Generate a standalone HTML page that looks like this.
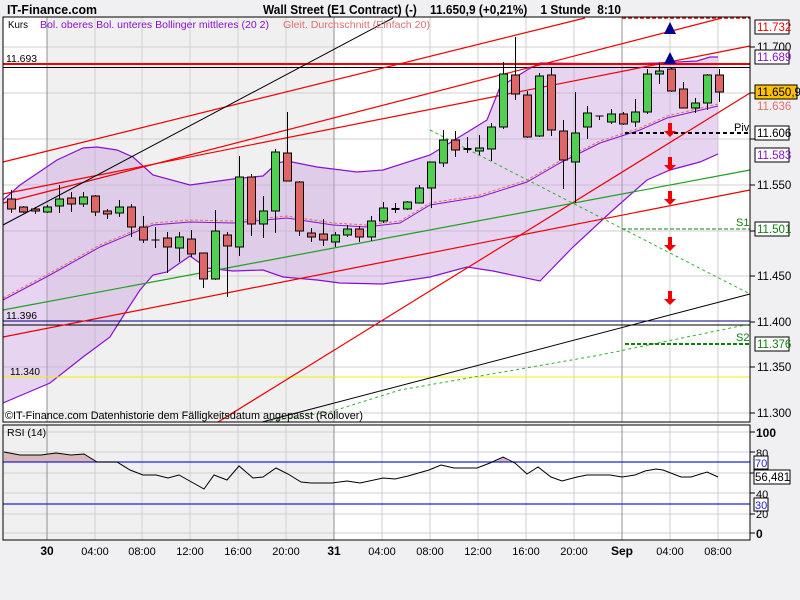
<!DOCTYPE html>
<html><head><meta charset="utf-8"><style>
body{margin:0;background:#f0f0f0;width:800px;height:600px;overflow:hidden;font-family:"Liberation Sans",Arial,sans-serif}
svg{display:block}
text{font-family:"Liberation Sans",Arial,sans-serif}
</style></head><body>
<svg width="800" height="600" viewBox="0 0 800 600" xmlns="http://www.w3.org/2000/svg">
<rect x="0" y="0" width="800" height="600" fill="#f0f0f2"/>
<text x="7" y="14" font-size="13" font-weight="bold" fill="#000" textLength="90" lengthAdjust="spacingAndGlyphs">IT-Finance.com</text>
<text x="263" y="14" font-size="12.5" font-weight="bold" fill="#000" xml:space="preserve" textLength="358" lengthAdjust="spacingAndGlyphs">Wall Street (E1 Contract) (-)    11.650,9 (+0,21%)    1 Stunde  8:10</text>
<!-- main panel -->
<rect x="3" y="17" width="747" height="405" fill="#fff"/>
<rect x="47" y="17" width="287" height="405" fill="#f0f0f0"/>
<g stroke="#cfcfcf" stroke-width="1">
<line x1="3" y1="47" x2="750" y2="47"/><line x1="3" y1="93" x2="750" y2="93"/><line x1="3" y1="139" x2="750" y2="139"/><line x1="3" y1="185" x2="750" y2="185"/><line x1="3" y1="231" x2="750" y2="231"/><line x1="3" y1="276" x2="750" y2="276"/><line x1="3" y1="367" x2="750" y2="367"/><line x1="3" y1="413" x2="750" y2="413"/>
<line x1="95" y1="17" x2="95" y2="422"/><line x1="142" y1="17" x2="142" y2="422"/><line x1="190" y1="17" x2="190" y2="422"/><line x1="238" y1="17" x2="238" y2="422"/><line x1="286" y1="17" x2="286" y2="422"/><line x1="382" y1="17" x2="382" y2="422"/><line x1="430" y1="17" x2="430" y2="422"/><line x1="478" y1="17" x2="478" y2="422"/><line x1="526" y1="17" x2="526" y2="422"/><line x1="574" y1="17" x2="574" y2="422"/><line x1="670" y1="17" x2="670" y2="422"/><line x1="718" y1="17" x2="718" y2="422"/>
</g>
<g stroke="#909090"><line x1="47" y1="17" x2="47" y2="422"/><line x1="334" y1="17" x2="334" y2="422"/><line x1="622" y1="17" x2="622" y2="422"/></g>
<!-- bollinger band -->
<polygon fill="#c8a0e0" fill-opacity="0.45" stroke="none" points="3,200 20,185 57,160 83,148 97,147 117,150 133,157 153,175 190,185 233,179 263,176 277,163 287,161 317,167 357,172 383,170 430,155 487,120 500,87 527,70 540,63 620,64 657,63 697,61 710,57 718,57 718,154 700,162 670,170 647,180 613,210 573,247 540,281 493,271 467,267 430,277 383,284 340,283 317,280 283,277 263,270 233,271 207,268 190,256 167,272 153,275 140,290 127,310 110,337 83,357 50,383 3,403"/>
<polyline fill="none" stroke="#8a10d0" stroke-width="1.2" points="3,200 20,185 57,160 83,148 97,147 117,150 133,157 153,175 190,185 233,179 263,176 277,163 287,161 317,167 357,172 383,170 430,155 487,120 500,87 527,70 540,63 620,64 657,63 697,61 710,57 718,57"/>
<polyline fill="none" stroke="#8a10d0" stroke-width="1.2" points="3,403 50,383 83,357 110,337 127,310 140,290 153,275 167,272 190,256 207,268 233,271 263,270 283,277 317,280 340,283 383,284 430,277 467,267 493,271 540,281 573,247 613,210 647,180 670,170 700,162 718,154"/>
<polyline fill="none" stroke="#8a10d0" stroke-width="1" points="3,300 50,275 100,247 133,233 153,225 190,222 233,223 287,218 333,225 367,227 400,223 430,205 480,197 527,182 560,163 600,143 640,130 667,118 718,106"/>
<polyline fill="none" stroke="#e07060" stroke-width="1" stroke-dasharray="3,2" points="3,298 50,273 100,245 133,231 153,223 190,220 233,221 287,216 333,223 367,225 400,221 430,203 480,195 527,180 560,161 600,141 640,128 667,116 718,104"/>
<!-- horizontal lines -->
<line x1="3" y1="64" x2="750" y2="64" stroke="#f00000" stroke-width="2"/>
<line x1="3" y1="67.5" x2="750" y2="67.5" stroke="#000" stroke-width="1"/>
<line x1="3" y1="321" x2="750" y2="321" stroke="#000080" stroke-width="1"/>
<line x1="3" y1="325" x2="750" y2="325" stroke="#000" stroke-width="1"/>
<line x1="3" y1="377" x2="750" y2="377" stroke="#f0f000" stroke-width="1"/>
<!-- trend lines -->
<g stroke="#f00000" stroke-width="1.2" fill="none">
<line x1="3" y1="162" x2="585" y2="18"/>
<line x1="3" y1="194" x2="750" y2="46"/>
<line x1="3" y1="203" x2="722" y2="18"/>
<line x1="3" y1="337" x2="750" y2="190"/>
<line x1="218" y1="422" x2="750" y2="93"/>
</g>
<line x1="3" y1="225" x2="393" y2="18" stroke="#000" stroke-width="1"/>
<line x1="262" y1="422" x2="750" y2="294" stroke="#000" stroke-width="1"/>
<line x1="3" y1="310" x2="750" y2="170" stroke="#20a020" stroke-width="1.2"/>
<polyline fill="none" stroke="#30b030" stroke-width="1" stroke-dasharray="3,3" points="270,421 330,412 400,390 600,355 750,324"/>
<line x1="430" y1="130" x2="750" y2="294" stroke="#30b030" stroke-width="1" stroke-dasharray="3,3"/>
<!-- pivots -->
<line x1="622" y1="18" x2="750" y2="18" stroke="#f00000" stroke-width="1.5" stroke-dasharray="4,2"/>
<line x1="625" y1="133" x2="750" y2="133" stroke="#000" stroke-width="2" stroke-dasharray="4,3"/>
<line x1="622" y1="229" x2="750" y2="229" stroke="#108010" stroke-width="1" stroke-dasharray="4,2"/>
<line x1="625" y1="344" x2="750" y2="344" stroke="#108010" stroke-width="2" stroke-dasharray="4,2"/>
<text x="734" y="131" font-size="11" fill="#000">Piv</text>
<text x="736" y="226" font-size="11" fill="#108010">S1</text>
<text x="736" y="341" font-size="11" fill="#108010">S2</text>
<!-- candles -->
<g stroke="#000" stroke-width="1">
<line x1="11.5" y1="190" x2="11.5" y2="213"/><rect x="7.5" y="199" width="8" height="10" fill="#df6666"/>
<line x1="23.5" y1="206" x2="23.5" y2="213"/><rect x="19.5" y="207" width="8" height="5" fill="#df6666"/>
<line x1="35.5" y1="207" x2="35.5" y2="214"/><rect x="31.5" y="209" width="8" height="2" fill="#df6666"/>
<line x1="47.5" y1="205" x2="47.5" y2="213"/><rect x="43.5" y="207" width="8" height="5" fill="#50d050"/>
<line x1="59.5" y1="185" x2="59.5" y2="213"/><rect x="55.5" y="199" width="8" height="7" fill="#50d050"/>
<line x1="71.5" y1="192" x2="71.5" y2="212"/><rect x="67.5" y="198" width="8" height="6" fill="#df6666"/>
<line x1="83.5" y1="192" x2="83.5" y2="207"/><rect x="79.5" y="197" width="8" height="7" fill="#50d050"/>
<line x1="95.5" y1="195" x2="95.5" y2="216"/><rect x="91.5" y="196" width="8" height="16" fill="#df6666"/>
<line x1="107.5" y1="209" x2="107.5" y2="219"/><rect x="103.5" y="211" width="8" height="3" fill="#df6666"/>
<line x1="119.5" y1="200" x2="119.5" y2="217"/><rect x="115.5" y="207" width="8" height="6" fill="#50d050"/>
<line x1="131.5" y1="204" x2="131.5" y2="237"/><rect x="127.5" y="207" width="8" height="20" fill="#df6666"/>
<line x1="143.5" y1="216" x2="143.5" y2="243"/><rect x="139.5" y="227" width="8" height="13" fill="#df6666"/>
<line x1="155.5" y1="227" x2="155.5" y2="248"/><line x1="151.5" y1="240" x2="159.5" y2="240"/>
<line x1="167.5" y1="232" x2="167.5" y2="273"/><rect x="163.5" y="238" width="8" height="9" fill="#df6666"/>
<line x1="179.5" y1="232" x2="179.5" y2="262"/><rect x="175.5" y="237" width="8" height="11" fill="#50d050"/>
<line x1="191.5" y1="230" x2="191.5" y2="257"/><rect x="187.5" y="239" width="8" height="15" fill="#df6666"/>
<line x1="203.5" y1="253" x2="203.5" y2="288"/><rect x="199.5" y="253" width="8" height="26" fill="#df6666"/>
<line x1="215.5" y1="210" x2="215.5" y2="280"/><rect x="211.5" y="231" width="8" height="48" fill="#50d050"/>
<line x1="227.5" y1="232" x2="227.5" y2="297"/><rect x="223.5" y="235" width="8" height="11" fill="#df6666"/>
<line x1="239.5" y1="156" x2="239.5" y2="256"/><rect x="235.5" y="177" width="8" height="70" fill="#50d050"/>
<line x1="251.5" y1="174" x2="251.5" y2="236"/><rect x="247.5" y="177" width="8" height="47" fill="#df6666"/>
<line x1="263.5" y1="196" x2="263.5" y2="238"/><rect x="259.5" y="211" width="8" height="13" fill="#50d050"/>
<line x1="275.5" y1="149" x2="275.5" y2="233"/><rect x="271.5" y="152" width="8" height="59" fill="#50d050"/>
<line x1="287.5" y1="112" x2="287.5" y2="181"/><rect x="283.5" y="153" width="8" height="28" fill="#df6666"/>
<line x1="299.5" y1="181" x2="299.5" y2="236"/><rect x="295.5" y="182" width="8" height="49" fill="#df6666"/>
<line x1="311.5" y1="228" x2="311.5" y2="242"/><rect x="307.5" y="233" width="8" height="4" fill="#df6666"/>
<line x1="323.5" y1="219" x2="323.5" y2="246"/><rect x="319.5" y="234" width="8" height="6" fill="#df6666"/>
<line x1="335.5" y1="232" x2="335.5" y2="247"/><rect x="331.5" y="235" width="8" height="7" fill="#50d050"/>
<line x1="347.5" y1="225" x2="347.5" y2="237"/><rect x="343.5" y="229" width="8" height="6" fill="#50d050"/>
<line x1="359.5" y1="226" x2="359.5" y2="242"/><rect x="355.5" y="229" width="8" height="8" fill="#df6666"/>
<line x1="371.5" y1="216" x2="371.5" y2="241"/><rect x="367.5" y="221" width="8" height="16" fill="#50d050"/>
<line x1="383.5" y1="202" x2="383.5" y2="223"/><rect x="379.5" y="208" width="8" height="13" fill="#50d050"/>
<line x1="395.5" y1="203" x2="395.5" y2="213"/><line x1="391.5" y1="209" x2="399.5" y2="209" stroke-width="2"/>
<line x1="407.5" y1="201" x2="407.5" y2="210"/><rect x="403.5" y="202" width="8" height="7" fill="#50d050"/>
<line x1="419.5" y1="185" x2="419.5" y2="203"/><rect x="415.5" y="188" width="8" height="15" fill="#50d050"/>
<line x1="431.5" y1="162" x2="431.5" y2="208"/><rect x="427.5" y="162" width="8" height="26" fill="#50d050"/>
<line x1="443.5" y1="130" x2="443.5" y2="167"/><rect x="439.5" y="140" width="8" height="23" fill="#50d050"/>
<line x1="455.5" y1="131" x2="455.5" y2="157"/><rect x="451.5" y="140" width="8" height="10" fill="#df6666"/>
<line x1="467.5" y1="137" x2="467.5" y2="153"/><line x1="463.5" y1="149" x2="471.5" y2="149" stroke-width="2"/>
<line x1="479.5" y1="135" x2="479.5" y2="155"/><rect x="475.5" y="148" width="8" height="3" fill="#50d050"/>
<line x1="491.5" y1="123" x2="491.5" y2="161"/><rect x="487.5" y="127" width="8" height="22" fill="#50d050"/>
<line x1="503.5" y1="62" x2="503.5" y2="129"/><rect x="499.5" y="74" width="8" height="53" fill="#50d050"/>
<line x1="515.5" y1="37" x2="515.5" y2="100"/><rect x="511.5" y="75" width="8" height="19" fill="#df6666"/>
<line x1="527.5" y1="91" x2="527.5" y2="138"/><rect x="523.5" y="95" width="8" height="42" fill="#df6666"/>
<line x1="539.5" y1="73" x2="539.5" y2="137"/><rect x="535.5" y="76" width="8" height="60" fill="#50d050"/>
<line x1="551.5" y1="68" x2="551.5" y2="136"/><rect x="547.5" y="75" width="8" height="55" fill="#df6666"/>
<line x1="563.5" y1="120" x2="563.5" y2="189"/><rect x="559.5" y="131" width="8" height="29" fill="#df6666"/>
<line x1="575.5" y1="92" x2="575.5" y2="203"/><rect x="571.5" y="133" width="8" height="29" fill="#50d050"/>
<line x1="587.5" y1="106" x2="587.5" y2="139"/><rect x="583.5" y="113" width="8" height="14" fill="#50d050"/>
<line x1="599.5" y1="116" x2="599.5" y2="120"/><line x1="595.5" y1="116" x2="603.5" y2="116"/>
<line x1="611.5" y1="109" x2="611.5" y2="124"/><rect x="607.5" y="114" width="8" height="8" fill="#50d050"/>
<line x1="623.5" y1="112" x2="623.5" y2="125"/><rect x="619.5" y="114" width="8" height="10" fill="#df6666"/>
<line x1="635.5" y1="99" x2="635.5" y2="127"/><rect x="631.5" y="112" width="8" height="10" fill="#50d050"/>
<line x1="647.5" y1="69" x2="647.5" y2="114"/><rect x="643.5" y="74" width="8" height="38" fill="#50d050"/>
<line x1="659.5" y1="63" x2="659.5" y2="84"/><rect x="655.5" y="71" width="8" height="3" fill="#50d050"/>
<line x1="671.5" y1="67" x2="671.5" y2="92"/><rect x="667.5" y="69" width="8" height="22" fill="#df6666"/>
<line x1="683.5" y1="82" x2="683.5" y2="108"/><rect x="679.5" y="89" width="8" height="19" fill="#df6666"/>
<line x1="695.5" y1="98" x2="695.5" y2="113"/><rect x="691.5" y="103" width="8" height="5" fill="#50d050"/>
<line x1="707.5" y1="74" x2="707.5" y2="110"/><rect x="703.5" y="75" width="8" height="28" fill="#50d050"/>
<line x1="719.5" y1="69" x2="719.5" y2="102"/><rect x="715.5" y="75" width="8" height="17" fill="#df6666"/>
</g>
<!-- signals -->
<polygon points="670,22 664,34 676,34" fill="#000090"/>
<polygon points="670,52 664,64 676,64" fill="#000090"/>
<g fill="#f00000">
<polygon points="668,123 672,123 672,131 676,131 670,137 664,131 668,131"/>
<polygon points="668,157 672,157 672,165 676,165 670,171 664,165 668,165"/>
<polygon points="668,191 672,191 672,199 676,199 670,205 664,199 668,199"/>
<polygon points="668,237 672,237 672,245 676,245 670,251 664,245 668,245"/>
<polygon points="668,291 672,291 672,299 676,299 670,305 664,299 668,299"/>
</g>
<rect x="3" y="17" width="747" height="405" fill="none" stroke="#000" stroke-width="1"/>
<!-- legend -->
<text x="8" y="28" font-size="10.5" fill="#000" textLength="20" lengthAdjust="spacingAndGlyphs">Kurs</text>
<text x="40" y="28" font-size="10.5" fill="#8a10d0" textLength="229" lengthAdjust="spacingAndGlyphs">Bol. oberes Bol. unteres Bollinger mittleres (20 2)</text>
<text x="283" y="28" font-size="10.5" fill="#e07070" textLength="147" lengthAdjust="spacingAndGlyphs">Gleit. Durchschnitt (Einfach 20)</text>
<text x="6" y="62" font-size="10.5" fill="#000" textLength="31" lengthAdjust="spacingAndGlyphs">11.693</text>
<text x="6" y="319" font-size="10.5" fill="#000" textLength="31" lengthAdjust="spacingAndGlyphs">11.396</text>
<text x="10" y="375" font-size="10.5" fill="#000" textLength="30" lengthAdjust="spacingAndGlyphs">11.340</text>
<text x="5" y="419" font-size="11" fill="#000" textLength="358" lengthAdjust="spacingAndGlyphs">©IT-Finance.com  Datenhistorie dem Fälligkeitsdatum angepasst (Rollover)</text>
<!-- right axis -->
<g stroke="#000"><line x1="750" y1="47" x2="755" y2="47"/><line x1="750" y1="93" x2="755" y2="93"/><line x1="750" y1="139" x2="755" y2="139"/><line x1="750" y1="185" x2="755" y2="185"/><line x1="750" y1="231" x2="755" y2="231"/><line x1="750" y1="276" x2="755" y2="276"/><line x1="750" y1="322" x2="755" y2="322"/><line x1="750" y1="367" x2="755" y2="367"/><line x1="750" y1="413" x2="755" y2="413"/></g>
<g font-size="11.5" fill="#000">
<text x="757" y="51">11.700</text><text x="757" y="189">11.550</text><text x="757" y="280">11.450</text><text x="757" y="326">11.400</text><text x="757" y="371">11.350</text><text x="757" y="417">11.300</text>
</g>
<rect x="755" y="20" width="34" height="14" fill="#fff" stroke="#000"/><text x="757" y="31" font-size="11.5" fill="#f00000">11.732</text>
<rect x="755" y="50" width="34" height="14" fill="#fff" stroke="#000"/><text x="757" y="61" font-size="11.5" fill="#8a10d0">11.689</text>
<rect x="755" y="85" width="42" height="14" fill="#ffc000" stroke="#000"/><text x="757" y="96" font-size="11.5" fill="#000">11.650,9</text>
<text x="757" y="110" font-size="11.5" fill="#e07070">11.636</text>
<rect x="755" y="126" width="34" height="14" fill="#fff" stroke="#000"/><text x="757" y="137" font-size="11.5" fill="#000">11.606</text>
<rect x="755" y="148" width="34" height="14" fill="#fff" stroke="#000"/><text x="757" y="159" font-size="11.5" fill="#8a10d0">11.583</text>
<rect x="755" y="222" width="34" height="14" fill="#fff" stroke="#000"/><text x="757" y="233" font-size="11.5" fill="#108010">11.501</text>
<rect x="755" y="337" width="34" height="14" fill="#fff" stroke="#000"/><text x="757" y="348" font-size="11.5" fill="#108010">11.376</text>
<!-- RSI panel -->
<rect x="3" y="425" width="747" height="115" fill="#fff"/>
<rect x="3" y="425" width="331" height="115" fill="#f0f0f0"/>
<g stroke="#cfcfcf"><line x1="3" y1="432" x2="750" y2="432"/><line x1="3" y1="452" x2="750" y2="452"/><line x1="3" y1="473" x2="750" y2="473"/><line x1="3" y1="493" x2="750" y2="493"/><line x1="3" y1="514" x2="750" y2="514"/><line x1="3" y1="533" x2="750" y2="533"/>
<line x1="95" y1="425" x2="95" y2="540"/><line x1="142" y1="425" x2="142" y2="540"/><line x1="190" y1="425" x2="190" y2="540"/><line x1="238" y1="425" x2="238" y2="540"/><line x1="286" y1="425" x2="286" y2="540"/><line x1="382" y1="425" x2="382" y2="540"/><line x1="430" y1="425" x2="430" y2="540"/><line x1="478" y1="425" x2="478" y2="540"/><line x1="526" y1="425" x2="526" y2="540"/><line x1="574" y1="425" x2="574" y2="540"/><line x1="670" y1="425" x2="670" y2="540"/><line x1="718" y1="425" x2="718" y2="540"/></g>
<g stroke="#909090"><line x1="47" y1="425" x2="47" y2="540"/><line x1="334" y1="425" x2="334" y2="540"/><line x1="622" y1="425" x2="622" y2="540"/></g>
<polygon points="4,452 20,455 41,455 56,453 71,455 84,454 97,462 4,462" fill="#d8b8b8"/>
<polygon points="495,462 503,457 510,462" fill="#d8b8b8"/>
<line x1="3" y1="462" x2="750" y2="462" stroke="#2020e0" stroke-width="1.3"/>
<line x1="3" y1="504" x2="750" y2="504" stroke="#2020e0" stroke-width="1.3"/>
<polyline fill="none" stroke="#000" stroke-width="1" points="4,452 20,455 41,455 56,453 71,455 84,454 97,462 117,462 130,470 143,475 156,475 168,478 179,475 204,489 214,475 227,480 239,466 253,478 263,477 276,468 288,474 301,482 311,483 332,483 347,481 360,483 383,478 395,479 408,476 429,470 441,465 454,468 477,468 490,463 503,457 515,463 527,474 538,467 551,477 562,481 577,477 587,475 610,475 622,477 635,475 645,471 656,469 663,470 681,477 691,477 707,472 718,477"/>
<text x="7" y="436" font-size="10.5" fill="#000">RSI (14)</text>
<rect x="3" y="425" width="747" height="115" fill="none" stroke="#000"/>
<g stroke="#000"><line x1="750" y1="432" x2="755" y2="432"/><line x1="750" y1="452" x2="755" y2="452"/><line x1="750" y1="473" x2="755" y2="473"/><line x1="750" y1="493" x2="755" y2="493"/><line x1="750" y1="514" x2="755" y2="514"/><line x1="750" y1="533" x2="755" y2="533"/></g>
<text x="756" y="437" font-size="12" font-weight="bold">100</text>
<text x="756" y="457" font-size="11">80</text>
<text x="756" y="498" font-size="11">40</text>
<text x="756" y="518" font-size="11">20</text>
<text x="756" y="538" font-size="12" font-weight="bold">0</text>
<rect x="754" y="456" width="14" height="13" fill="#fff" stroke="#000"/><text x="755" y="467" font-size="11" fill="#2020e0">70</text>
<rect x="754" y="498" width="14" height="13" fill="#fff" stroke="#000"/><text x="755" y="509" font-size="11" fill="#2020e0">30</text>
<rect x="754" y="470" width="36" height="14" fill="#fff" stroke="#000"/><text x="755" y="481" font-size="11.5" fill="#000">56,481</text>
<!-- time axis -->
<g font-size="11" fill="#000" text-anchor="middle">
<text x="47" y="555" font-size="12" font-weight="bold">30</text>
<text x="95" y="555">04:00</text><text x="142" y="555">08:00</text><text x="190" y="555">12:00</text><text x="238" y="555">16:00</text><text x="286" y="555">20:00</text>
<text x="334" y="555" font-size="12" font-weight="bold">31</text>
<text x="382" y="555">04:00</text><text x="430" y="555">08:00</text><text x="478" y="555">12:00</text><text x="526" y="555">16:00</text><text x="574" y="555">20:00</text>
<text x="622" y="555" font-size="12" font-weight="bold">Sep</text>
<text x="670" y="555">04:00</text><text x="718" y="555">08:00</text>
</g>
</svg>
</body></html>
